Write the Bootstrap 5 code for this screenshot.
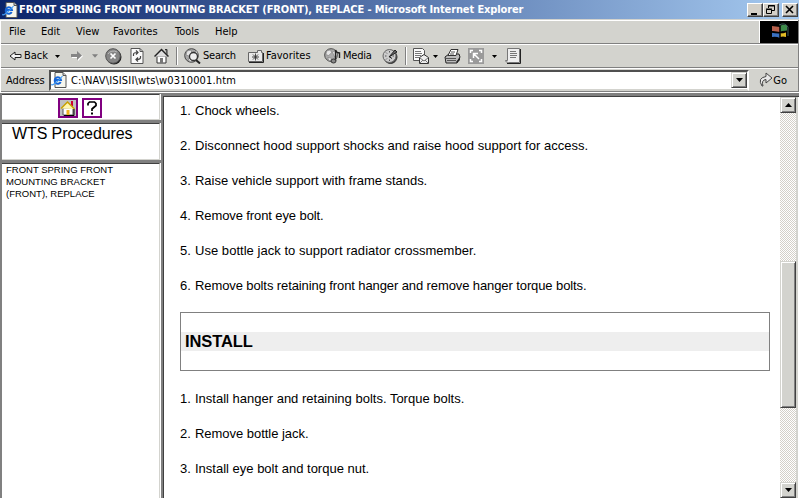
<!DOCTYPE html>
<html lang="en">
<head>
<meta charset="utf-8">
<title>FRONT SPRING FRONT MOUNTING BRACKET (FRONT), REPLACE</title>
<link href="https://cdn.jsdelivr.net/npm/bootstrap@5.3.0/dist/css/bootstrap.min.css" rel="stylesheet">
<style>
html,body{height:498px;overflow:hidden}
body{width:799px;background:#d3d3ce;color:#000;font:11px/14px "DejaVu Sans Condensed","DejaVu Sans",sans-serif}
svg{display:block;flex:none}
.titlebar{height:19px;background:linear-gradient(90deg,#0a246a,#a6caf0);color:#fff;font-weight:bold;padding:0 1px 0 2px}
.titlebar .caption{letter-spacing:-.12px;margin-left:1px;font-size:11px}
.winbtn{width:16px;height:14px;background:#d4d0c8;border:1px solid;border-color:#fff #404040 #404040 #fff;box-shadow:inset -1px -1px #808080}
.winbtn-close{margin-left:3px}
.chrome{border-left:1px solid #fff;border-right:1px solid #808080}
.menubar{height:24px;border-top:1px solid #fff;border-bottom:1px solid #808080;margin-top:1px}
.menubar span{white-space:nowrap}
.throbber{width:39px;height:22px;background:#000;border-left:1px solid #fff}
.tools{height:24px;border-top:1px solid #fff;border-bottom:1px solid #808080}
.addr{height:24px;border-top:1px solid #fff;border-bottom:1px solid #808080}
.field{width:700px;height:21px;background:#fff;border:2px solid;border-color:#505050 #fff #d3d3ce #505050}
.slot{white-space:nowrap;flex:none;overflow:visible}
.sep{width:2px;height:18px;border-left:1px solid #808080;border-right:1px solid #fff}
#m-file{width:32px;margin-left:8px}#m-edit{width:35px}#m-view{width:37px}#m-fav{width:62px}#m-tools{width:40px}#m-help{width:30px}
.s-arrow{width:15px;margin-left:8px}.s-back{width:31px}.s-c1{width:15px}.s-fwd{width:22px}.s-c2{width:13px}.s-stop{width:25px}.s-ref{width:24px}.s-home{width:22px}.s-sep{width:8px}.s-srch{width:19px}.s-tsrch{width:45px;letter-spacing:-.2px}.s-fav{width:18px}.s-tfav{width:58px}.s-med{width:19px}.s-tmed{width:39px;letter-spacing:-.2px}.s-hist{width:23px}.s-mail{width:20px}.s-c3{width:11px}.s-prt{width:24px}.s-full{width:24px}.s-c4{width:13px}
.addr-label{width:48px;padding-left:5px;padding-top:1px;letter-spacing:-.1px}.addr-text{margin-left:4px;padding-top:2px;letter-spacing:.16px}.dropbtn{width:16px;height:17px}
.go-icon{margin-left:10px}.go-label{margin-right:11px;padding-top:1px}
.frames{height:406px;background:#808080;border-top:1px solid #fff}
.side{width:159px;margin-left:2px;padding-top:1px}
.pane{background:#fff;border-top:1px solid #404040;border-right:1px solid #d3d3ce;box-shadow:1px 0 #fff}
.pane1{height:26px;border-bottom:1px solid #d3d3ce}
.pane2{height:37px;border-bottom:1px solid #d3d3ce;margin-top:3px}
.pane3{height:335px;margin-top:3px}
.icn{width:20px;height:20px;border:2px solid #800080;background:#fff;margin:3px 0 0 4px}
.icn-home{margin-left:56px}
.heading-side{font:16px/20px "Liberation Sans",Arial,sans-serif;letter-spacing:-.1px;padding:0 0 0 10px}
.toc{font:9.5px/12px "Liberation Sans",Arial,sans-serif;padding:0 0 0 4px}
.main{width:616px;height:401px;background:#fff;font-family:"Liberation Sans",Arial,sans-serif;font-size:13px;line-height:15px;padding:6px 0 0 16px}
.mainwrap{border-left:1px solid #404040;border-top:1px solid #404040;margin-top:3px;margin-left:3px;background:#fff}
.step{height:35px;white-space:nowrap}
.num{width:15px}
.ls-wide{letter-spacing:.035px}.ls-slight{letter-spacing:-.03px}.ls-tight{letter-spacing:-.1px}
.boxed{width:590px;height:59px;border:1px solid #808080;padding-top:19px;margin-top:-1px;margin-bottom:20px}
.bar{height:19px;background:#eee;font-size:16.5px;line-height:19px;font-weight:bold;padding-left:4px;letter-spacing:-.1px}
.track{width:16px;background:repeating-conic-gradient(#d4d0c8 0 25%,#fff 0 50%) 0 0/2px 2px}
.btn3d{width:16px;height:16px;background:#d3d3ce;border:1px solid;border-color:#d3d3ce #404040 #404040 #d3d3ce;box-shadow:inset 1px 1px #fff,inset -1px -1px #808080}
.thumb{height:147px;margin-top:148px}
.edge{width:3px;background:#d3d3ce;border-right:1px solid #fff}
</style>
<script src="https://cdn.jsdelivr.net/npm/bootstrap@5.3.0/dist/js/bootstrap.bundle.min.js"></script>
</head>
<body>
<svg width="0" height="0" class="position-absolute" aria-hidden="true">
<symbol id="page" viewBox="0 0 16 16"><path d="M4 .5h8l3 3v12H4z" fill="#f6f6ee" stroke="#555"/><path d="M12 .5v3h3" fill="#ccc" stroke="#555"/><path d="M9.700 10A3.200 3.200 0 1 1 10 8H4.500" fill="none" stroke="#1565d8" stroke-width="1.900"/><path d="M1 12C-1 15 6 11 11.500 4" fill="none" stroke="#3f9bf5" stroke-width="1.100"/></symbol>
<symbol id="tri" viewBox="0 0 7 4"><path d="M0 0h7L3.500 4z"/></symbol>
<symbol id="globe" viewBox="0 0 16 16"><circle cx="7.500" cy="7.500" r="6.800" fill="#aaa" stroke="#444"/><path d="M3 3l4-1 1 3-3 3-3-1zM9 4l4-1 1 5-3 1zM4 10l4 1-1 3-2-1z" fill="#e5e5e5" stroke="#777" stroke-width=".6"/></symbol>
</svg>

<header class="titlebar d-flex align-items-center">
<svg width="16" height="16"><use href="#page"/></svg><span class="caption text-nowrap">FRONT SPRING FRONT MOUNTING BRACKET (FRONT), REPLACE - Microsoft Internet Explorer</span>
<div class="d-flex ms-auto">
<div class="winbtn"><svg width="14" height="12"><path d="M3 9h6v2H3z"/></svg></div>
<div class="winbtn"><svg width="14" height="12" fill="none" stroke="#000"><path d="M4.500 4V1.500h6v5H8M4 2h7M2.500 5.500h5v4h-5zM2 5h6"/></svg></div>
<div class="winbtn winbtn-close"><svg width="14" height="12"><path d="M3 2l7 7M10 2L3 9" stroke="#000" stroke-width="1.600"/></svg></div>
</div></header>

<div class="chrome">
<nav class="menubar d-flex align-items-center">
<span class="slot" id="m-file">File</span><span class="slot" id="m-edit">Edit</span><span class="slot" id="m-view">View</span><span class="slot" id="m-fav">Favorites</span><span class="slot" id="m-tools">Tools</span><span class="slot" id="m-help">Help</span>
<div class="throbber ms-auto"><svg width="38" height="22"><path d="M12 5l8 1v5l-8-1z" fill="#b8604c"/><path d="M20 5q3-2 7-1v6q-3-1-7 1z" fill="#3d8a4a"/><path d="M12 11l8 1v5q-4-2-8-1z" fill="#3a70c0"/><path d="M20 12q4-2 6-1v5q-3-1-6 0z" fill="#e3bd26"/><path d="M20 5v12M12 11q8 2 16-1" stroke="#000" fill="none" stroke-width="1.500"/><path d="M19 4q6-3 9 2v9" stroke="#3d5a5a" fill="none"/></svg></div>
</nav>
<div class="tools d-flex align-items-center">
<span class="slot s-arrow"><svg width="14" height="12"><path d="M1 6l5-4v2.500h6v3H6V10z" fill="#f5f5f5" stroke="#222"/></svg></span><span class="slot s-back">Back</span>
<span class="slot s-c1"><svg width="5" height="3"><use href="#tri"/></svg></span>
<span class="slot s-fwd"><svg width="14" height="12"><path d="M2 5h6V2l5 4-5 5V8H2z" fill="#fff"/><path d="M1 4h6V1l5 4.500L7 10V7H1z" fill="#858585"/></svg></span>
<span class="slot s-c2"><svg width="6" height="4" fill="#808080"><use href="#tri"/></svg></span>
<span class="slot s-stop"><svg width="17" height="17"><circle cx="9" cy="9" r="7.500" fill="#222"/><circle cx="8" cy="8" r="7.300" fill="#858585" stroke="#555"/><path d="M3 6a6 5 0 0 1 9-2" fill="none" stroke="#bbb"/><path d="M5.500 5.500l5 5M10.500 5.500l-5 5" stroke="#fff" stroke-width="1.700"/></svg></span>
<span class="slot s-ref"><svg width="14" height="16"><path d="M1 .5h9l3 3v12H1z" fill="#fafafa" stroke="#555"/><path d="M10 .5v3h3" fill="none" stroke="#555"/><path d="M3.500 8V6.500q0-2 4-2M6 2.500l2 2-2 2M10.500 8v1.500q0 2-4 2M8 9.500l-2 2 2 2" fill="none" stroke="#444" stroke-width="1.200"/></svg></span>
<span class="slot s-home"><svg width="15" height="16"><path d="M3 8h9v7H3z" fill="#fff" stroke="#333"/><path d="M11 1.500h2v5" fill="#777" stroke="#333"/><path d="M.5 8.500L7.500 1.500l7 7" fill="#ddd" stroke="#222" stroke-width="1.500"/><path d="M6 10h3v5H6z" fill="#777"/></svg></span>
<span class="slot s-sep"><div class="sep"></div></span>
<span class="slot s-srch"><svg width="17" height="16"><use href="#globe" width="16" height="16"/><circle cx="9.500" cy="8.500" r="4" fill="#eee" stroke="#333" stroke-width="1.300"/><path d="M12 12l4 3.500" stroke="#222" stroke-width="2"/></svg></span><span class="slot s-tsrch">Search</span>
<span class="slot s-fav"><svg width="16" height="14"><path d="M.5 3.500h9V1.500h4v2h1v9H.5z" fill="#e9e9e9" stroke="#666"/><path d="M1 13.500h14.500V4" fill="none" stroke="#222"/><path d="M7.500 4.500v7M4 8h7M5 5.500l5 5M10 5.500l-5 5" stroke="#333" stroke-width=".9"/></svg></span><span class="slot s-tfav">Favorites</span>
<span class="slot s-med"><svg width="17" height="16"><use href="#globe" width="15" height="15"/><path d="M11.500 13V2q1 3 4 3v5" fill="none" stroke="#222" stroke-width="1.400"/><ellipse cx="9.500" cy="13" rx="2.500" ry="2" fill="#888" stroke="#333"/></svg></span><span class="slot s-tmed">Media</span>
<span class="slot s-hist"><svg width="17" height="16"><circle cx="8.500" cy="9" r="6.500" fill="#444" stroke="#333"/><circle cx="7.500" cy="8" r="6.500" fill="#ccc" stroke="#666"/><path d="M7.500 3v1.500M3 8h1.500M7.500 11.500V13M12 8h-1.500M4 4.500l1 1M4 11.500l1-1" stroke="#555"/><path d="M7 9l6-7 2 2z" fill="#666" stroke="#222"/><path d="M7 8.500l3 2" stroke="#222"/></svg></span>
<span class="slot s-sep"><div class="sep"></div></span>
<span class="slot s-mail"><svg width="17" height="16"><path d="M.5.5h9l2 2v10H.5z" fill="#fafafa" stroke="#555"/><path d="M2 3.500h6M2 5.500h7M2 7.500h6M2 9.500h4" stroke="#777"/><path d="M6.500 9.500l4.500-3 4.500 3v6h-9z" fill="#eee" stroke="#333"/><path d="M7 10l4 3 4-3M7 15l3-3M15 15l-3-3" fill="none" stroke="#777"/></svg></span>
<span class="slot s-c3"><svg width="5" height="3"><use href="#tri"/></svg></span>
<span class="slot s-prt"><svg width="17" height="15"><path d="M1 8l4-3h10l1 3-3 6H2z" fill="#bbb" stroke="#222"/><path d="M4 6.500l3-6h7l-2 6z" fill="#fff" stroke="#333"/><path d="M7 3h4M6 5h4M2 9.500h10M3 11.500h9" stroke="#555"/><path d="M12 13l4-5v3l-3 3" fill="#222"/></svg></span>
<span class="slot s-full"><svg width="16" height="16"><path d="M0 0h16v16H0z" fill="#9a9a9a"/><path d="M2.500 5V2.500H5M11 2.500h2.500V5M2.500 11v2.500H5M11 13.500h2.500V11M11 11L5.500 5.500M5.500 10V5.500H10" fill="none" stroke="#fff" stroke-width="1.500"/></svg></span>
<span class="slot s-c4"><svg width="5" height="3"><use href="#tri"/></svg></span>
<span class="slot"><svg width="17" height="16"><path d="M2.500 .5h12v14h-11q-3 0-3-2h2z" fill="#eee" stroke="#777"/><path d="M2 15.500h13.500V1" fill="none" stroke="#222"/><path d="M5 3.500h6M5 5.500h7M5 7.500h7M5 9.500h6" stroke="#777"/></svg></span>
</div>
<div class="addr d-flex align-items-center">
<span class="slot addr-label">Address</span>
<div class="field d-flex align-items-center"><svg width="16" height="16"><use href="#page"/></svg><span class="addr-text text-nowrap">C:\NAV\ISISII\wts\w0310001.htm</span><div class="btn3d dropbtn ms-auto d-flex align-items-center justify-content-center"><svg width="7" height="4"><use href="#tri"/></svg></div></div>
<svg class="go-icon" width="14" height="16"><path d="M3 14Q-2 6 7 4.500V1l6 5-6 5V7.500Q2 8 4 14z" fill="#e8e8e8" stroke="#444"/></svg><span class="ms-auto go-label">Go</span>
</div>
</div>

<div class="frames d-flex">
<aside class="side">
<div class="pane pane1 d-flex"><div class="icn icn-home"><svg width="16" height="16"><path d="M0 0h16v16H0z" fill="#c0c0c0"/><path d="M3 8h10v7H3z" fill="#fff" stroke="#555"/><path d="M11 1h2v5h-2z" fill="#d00030"/><path d="M1 8.500l6.500-6.500 7 7" fill="#fff6b0" stroke="#c9a000" stroke-width="1.500"/><path d="M6.500 10h3v5h-3z" fill="#f0b020"/><path d="M4 15.500h10V9" fill="none" stroke="#000"/></svg></div><div class="icn"><svg width="16" height="16"><path d="M4 5.500V3.500L5.500 2h5L12 3.500v2L8 9v2" fill="none" stroke="#000" stroke-width="1.700"/><path d="M7 12.500h2v2H7z"/></svg></div></div>
<div class="pane pane2 heading-side">WTS Procedures</div>
<div class="pane pane3 toc">FRONT SPRING FRONT<br>MOUNTING BRACKET<br>(FRONT), REPLACE</div>
</aside>
<main class="mainwrap d-flex">
<div class="main">
<div class="step d-flex"><span class="num">1.</span><span>Chock wheels.</span></div>
<div class="step d-flex"><span class="num">2.</span><span class="ls-wide">Disconnect hood support shocks and raise hood support for access.</span></div>
<div class="step d-flex"><span class="num">3.</span><span class="ls-slight">Raise vehicle support with frame stands.</span></div>
<div class="step d-flex"><span class="num">4.</span><span class="ls-tight">Remove front eye bolt.</span></div>
<div class="step d-flex"><span class="num">5.</span><span class="ls-wide">Use bottle jack to support radiator crossmember.</span></div>
<div class="step d-flex"><span class="num">6.</span><span class="ls-tight">Remove bolts retaining front hanger and remove hanger torque bolts.</span></div>
<div class="boxed"><div class="bar">INSTALL</div></div>
<div class="step d-flex"><span class="num">1.</span><span>Install hanger and retaining bolts. Torque bolts.</span></div>
<div class="step d-flex"><span class="num">2.</span><span class="ls-slight">Remove bottle jack.</span></div>
<div class="step d-flex"><span class="num">3.</span><span>Install eye bolt and torque nut.</span></div>
</div>
<div class="track d-flex flex-column">
<div class="btn3d d-flex align-items-center justify-content-center"><svg width="7" height="4"><path d="M0 4h7L3.500 0z"/></svg></div>
<div class="btn3d thumb"></div>
<div class="btn3d mt-auto d-flex align-items-center justify-content-center"><svg width="7" height="4"><use href="#tri"/></svg></div>
</div>
<div class="edge"></div>
</main>
</div>
</body>
</html>
